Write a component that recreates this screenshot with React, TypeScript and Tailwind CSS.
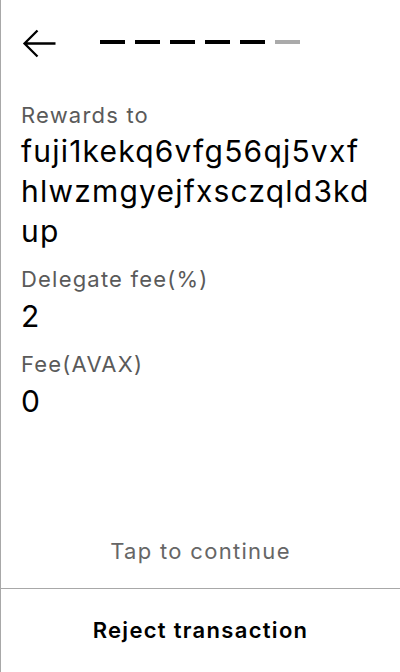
import React from 'react';

const FONT = { fontFamily: 'Inter, "Noto Sans", sans-serif' };

const STEPS = [true, true, true, true, true, false];

function BackArrow() {
  return (
    <svg width="40" height="40" viewBox="0 0 40 40" fill="none" className="shrink-0">
      <path d="M17.5 7.5 L4.5 20.5 L17.5 33.5 M4.5 20.5 H35.5" stroke="#000" strokeWidth="2.3" />
    </svg>
  );
}

function Field({ label, value, first }: { label: string; value: string; first?: boolean }) {
  return (
    <div className={first ? 'mt-[38px]' : 'mt-[14px]'}>
      <p className="text-[22px] leading-[28px] tracking-[1.2px] text-[#5a5a5a]">{label}</p>
      <p className={first ? 'mt-[2px] text-[30px] leading-[40px] tracking-[1.2px] break-all' : 'mt-[3px] text-[30px] leading-[40px] tracking-[1.2px] break-all'}>
        {value}
      </p>
    </div>
  );
}

export default function App() {
  return (
    <div className="w-[400px] h-[672px] flex flex-col bg-white border-l border-[#a8a8a8] text-black" style={FONT}>
      {/* Header */}
      <div className="flex items-start pl-[19px] pt-[23px]">
        <BackArrow />
        <div className="flex gap-[10px] ml-[40px] mt-[17px]">
          {STEPS.map((done, i) => (
            <div key={i} className={done ? 'w-[25px] h-1 bg-black' : 'w-[25px] h-1 bg-[#aaaaaa]'} />
          ))}
        </div>
      </div>

      {/* Details */}
      <div className="flex-1 pl-5 pr-[23px]">
        <Field first label="Rewards to" value="fuji1kekq6vfg56qj5vxfhlwzmgyejfxsczqld3kdup" />
        <Field label="Delegate fee(%)" value="2" />
        <Field label="Fee(AVAX)" value="0" />
      </div>

      <p className="pb-[23px] text-center text-[22px] leading-[28px] tracking-[1.3px] text-[#666666]">Tap to continue</p>

      <div className="h-[84px] border-t border-[#a8a8a8] flex items-center justify-center">
        <span className="text-[22px] font-semibold tracking-[1.3px]">Reject transaction</span>
      </div>
    </div>
  );
}
